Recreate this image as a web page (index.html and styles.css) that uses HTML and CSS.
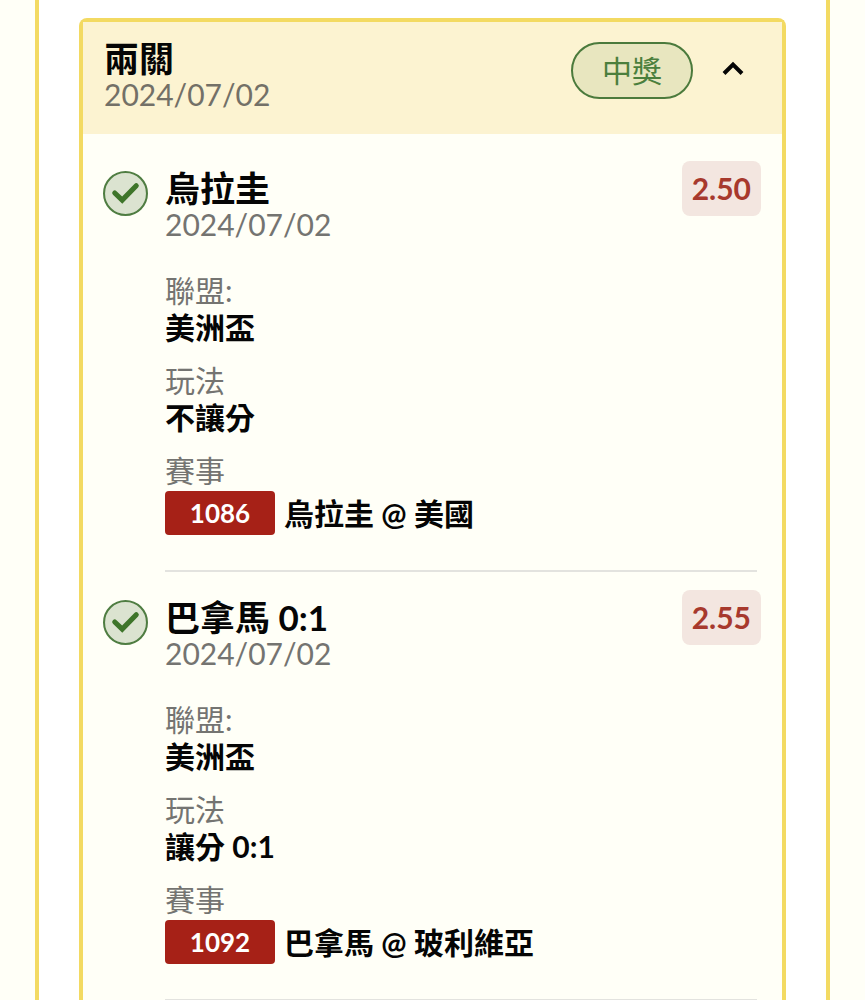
FILE: index.html
```html
<!DOCTYPE html>
<html lang="zh-Hant">
<head>
<meta charset="utf-8">
<meta name="viewport" content="width=device-width, initial-scale=1">
<title>兩關 2024/07/02</title>
<link rel="stylesheet" href="styles.css">
</head>
<body>
<main class="panel">
  <section class="slip">
    <header class="slip-header">
      <div class="heading">
        <h1 class="title">兩關</h1>
        <time class="date" datetime="2024-07-02">2024/07/02</time>
      </div>
      <span class="status">中獎</span>
      <button class="toggle" type="button" aria-label="收合" aria-expanded="true">
        <svg width="24" height="18" viewBox="0 0 24 18" aria-hidden="true"><path d="M3 14.500 12 5.500 21 14.500" fill="none" stroke="currentColor" stroke-width="4"/></svg>
      </button>
    </header>

    <div class="legs">
      <article class="leg">
        <svg class="check" viewBox="0 0 44 44" aria-hidden="true"><circle class="check-ring" cx="22" cy="22" r="21"/><path class="check-tick" d="M11.500 21.500 18.800 28.500 32.500 14.500"/></svg>
        <div class="leg-body">
          <h2 class="title">烏拉圭</h2>
          <time class="date" datetime="2024-07-02">2024/07/02</time>
          <dl class="facts">
            <div><dt>聯盟:</dt><dd>美洲盃</dd></div>
            <div><dt>玩法</dt><dd>不讓分</dd></div>
            <div><dt>賽事</dt><dd class="match"><span class="code">1086</span><span>烏拉圭 @ 美國</span></dd></div>
          </dl>
        </div>
        <span class="odds">2.50</span>
      </article>
      <hr class="divider">
      <article class="leg">
        <svg class="check" viewBox="0 0 44 44" aria-hidden="true"><circle class="check-ring" cx="22" cy="22" r="21"/><path class="check-tick" d="M11.500 21.500 18.800 28.500 32.500 14.500"/></svg>
        <div class="leg-body">
          <h2 class="title">巴拿馬 0:1</h2>
          <time class="date" datetime="2024-07-02">2024/07/02</time>
          <dl class="facts">
            <div><dt>聯盟:</dt><dd>美洲盃</dd></div>
            <div><dt>玩法</dt><dd>讓分 0:1</dd></div>
            <div><dt>賽事</dt><dd class="match"><span class="code">1092</span><span>巴拿馬 @ 玻利維亞</span></dd></div>
          </dl>
        </div>
        <span class="odds">2.55</span>
      </article>
      <hr class="divider">
    </div>
  </section>
</main>
</body>
</html>
```
FILE: styles.css
```css
* {
  box-sizing: border-box;
}

body {
  margin: 0;
  background: #fffff7;
  color: #050505;
  font-family: Lato, "Noto Sans CJK TC", sans-serif;
  font-size: 30px;
}

h1, h2, dl, dd, hr {
  margin: 0;
}

.panel {
  display: flow-root;
  min-height: 100vh;
  margin: 0 35px;
  padding: 18px 40px 0;
  border: solid #f3da62;
  border-width: 0 4px;
  background: #fff;
}

.slip {
  border: 4px solid #f3da62;
  border-bottom: 0;
  border-radius: 8px 8px 0 0;
  background: #fffff7;
}

.slip-header {
  display: flex;
  align-items: flex-start;
  padding: 17px 33px 23px 21px;
  background: #fcf3d1;
}

.heading {
  flex: 1;
}

.title {
  font-size: 35px;
  font-weight: 700;
  line-height: 38px;
}

.date {
  display: block;
  color: #737067;
  line-height: 34px;
}

.leg .date {
  color: #747471;
}

.status {
  margin: 3px 24px 0 0;
  padding: 0 29px;
  border: 2px solid #4b7a3c;
  border-radius: 29px;
  background: #e8e6bf;
  color: #4b7f3d;
  line-height: 53px;
}

.toggle {
  display: flex;
  align-items: center;
  justify-content: center;
  width: 32px;
  height: 58px;
  padding: 0;
  border: 0;
  background: none;
  color: #050505;
}

.legs {
  padding: 27px 21px 0 20px;
}

.leg {
  display: flex;
  align-items: flex-start;
  padding-bottom: 35px;
}

.check {
  width: 45px;
  height: 45px;
  margin: 10px 17px 0 0;
}

.check-ring {
  fill: #dbe3d0;
  stroke: #4f7d42;
  stroke-width: 2;
}

.check-tick {
  fill: none;
  stroke: #3e752a;
  stroke-width: 5;
  stroke-linecap: round;
}

.leg-body {
  flex: 1;
  padding-top: 8px;
}

.odds {
  padding: 0 10px;
  border-radius: 8px;
  background: #f3e6e0;
  color: #a7392d;
  font-weight: 700;
  line-height: 55px;
}

.facts {
  display: grid;
  gap: 16px;
  margin-top: 31px;
  line-height: 37px;
}

.facts dt {
  color: #747471;
}

.facts dd {
  font-weight: 700;
}

.facts .match {
  display: flex;
  align-items: center;
  gap: 9px;
  margin-top: 2px;
}

.code {
  width: 110px;
  border-radius: 4px;
  background: #a62117;
  color: #fff;
  font-size: 26px;
  line-height: 44px;
  text-align: center;
}

.divider {
  margin: 0 4px 18px 62px;
  border: 0;
  border-top: 2px solid #e3e3df;
}

.divider:last-child {
  margin-bottom: 0;
}
```
